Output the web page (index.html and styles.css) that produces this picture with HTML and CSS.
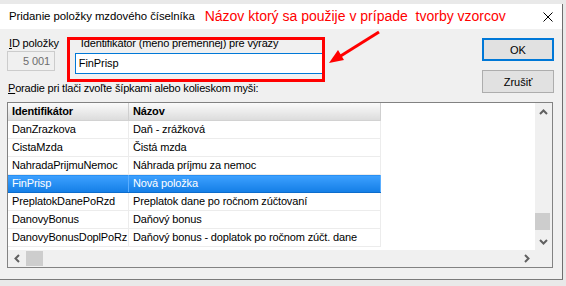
FILE: index.html
```html
<!DOCTYPE html>
<html lang="sk">
<head>
    <meta charset="UTF-8">
    <title>Pridanie položky mzdového číselníka</title>
    <link rel="stylesheet" href="styles.css">
</head>
<body>
    <div class="dialog">
        <div class="titlebar">
            <span class="title">Pridanie položky mzdového číselníka</span>
            <span class="note">Názov ktorý sa použije v prípade&nbsp; tvorby vzorcov</span>
            <svg class="close" width="10" height="10" viewBox="0 0 10 10">
                <path d="M0.5 0.5 L9.5 9.5 M9.5 0.5 L0.5 9.5" stroke="#000" stroke-width="1" fill="none"/>
            </svg>
        </div>

        <div class="content">
            <div class="fields">
                <div class="field id-field">
                    <label><u>I</u>D položky</label>
                    <div class="input disabled">5 001</div>
                </div>
                <div class="field name-field">
                    <label>Identifikátor (meno premennej) pre výrazy</label>
                    <div class="input focused">FinPrisp</div>
                </div>
            </div>

            <div class="buttons">
                <button class="btn btn-default">OK</button>
                <button class="btn">Zrušiť</button>
            </div>

            <div class="list-label"><u>P</u>oradie pri tlači zvoľte šípkami alebo kolieskom myši:</div>

            <div class="list">
                <div class="list-view">
                    <table class="grid">
                        <thead>
                            <tr><th class="col-id">Identifikátor</th><th class="col-name">Názov</th></tr>
                        </thead>
                        <tbody>
                            <tr><td>DanZrazkova</td><td>Daň - zrážková</td></tr>
                            <tr><td>CistaMzda</td><td>Čistá mzda</td></tr>
                            <tr><td>NahradaPrijmuNemoc</td><td>Náhrada príjmu za nemoc</td></tr>
                            <tr class="selected"><td>FinPrisp</td><td>Nová položka</td></tr>
                            <tr><td>PreplatokDanePoRzd</td><td>Preplatok dane po ročnom zúčtovaní</td></tr>
                            <tr><td>DanovyBonus</td><td>Daňový bonus</td></tr>
                            <tr><td>DanovyBonusDoplPoRz</td><td>Daňový bonus - doplatok po ročnom zúčt. dane</td></tr>
                        </tbody>
                    </table>
                </div>

                <div class="vscroll">
                    <div class="sb-btn">
                        <svg width="9" height="6" viewBox="0 0 9 6"><path d="M1 5 L4.5 1.5 L8 5" stroke="#606060" stroke-width="2" fill="none"/></svg>
                    </div>
                    <div class="sb-track"><div class="sb-thumb v-thumb"></div></div>
                    <div class="sb-btn">
                        <svg width="9" height="6" viewBox="0 0 9 6"><path d="M1 1 L4.5 4.5 L8 1" stroke="#606060" stroke-width="2" fill="none"/></svg>
                    </div>
                </div>

                <div class="hscroll">
                    <div class="sb-btn">
                        <svg width="6" height="9" viewBox="0 0 6 9"><path d="M5 1 L1.5 4.5 L5 8" stroke="#606060" stroke-width="2" fill="none"/></svg>
                    </div>
                    <div class="sb-track sb-track-h"><div class="sb-thumb h-thumb"></div></div>
                    <div class="sb-btn">
                        <svg width="6" height="9" viewBox="0 0 6 9"><path d="M1 1 L4.5 4.5 L1 8" stroke="#606060" stroke-width="2" fill="none"/></svg>
                    </div>
                </div>

                <div class="corner"></div>
            </div>
        </div>
    </div>

    <!-- annotation drawn over the screenshot -->
    <svg class="annotation" width="566" height="286" viewBox="0 0 566 286">
        <rect x="68.5" y="38.5" width="255" height="42" fill="none" stroke="#ff0000" stroke-width="3"/>
        <line x1="379" y1="32" x2="339" y2="57" stroke="#ff0000" stroke-width="3"/>
        <polygon points="329,63 344,60 338,50" fill="#ff0000"/>
    </svg>
</body>
</html>
```

FILE: styles.css
```css
body {
    margin: 0;
    background: #e9e9e9;
    font-family: "Liberation Sans", Arial, sans-serif;
    font-size: 11px;
    color: #000;
    position: relative;
    width: 566px;
    height: 286px;
    overflow: hidden;
}

.dialog {
    width: 562px;
    margin-top: 4px;
    border-right: 1px solid #6e6e6e;
    border-bottom: 1px solid #7a7a7a;
    background: #f0f0f0;
}

.titlebar {
    height: 25px;
    background: #fff;
    display: flex;
    align-items: center;
    padding: 0 9px 1px 9px;
    box-sizing: border-box;
}

.title {
    font-size: 11.4px;
    letter-spacing: -0.05px;
}

.note {
    margin-left: 10px;
    font-size: 14px;
    color: #ff0000;
}

.close {
    margin-left: auto;
    margin-top: 1px;
}

.content {
    display: grid;
    grid-template-columns: 1fr 72px;
    padding: 8px 8px 11px 7px;
}

.fields {
    display: flex;
    gap: 16px;
    height: 37px;
}

.field label {
    display: block;
    line-height: 13px;
    letter-spacing: -0.15px;
}

.id-field label {
    padding-left: 2px;
}

.name-field label {
    padding-left: 6px;
}

.input {
    box-sizing: border-box;
    line-height: 19px;
    background: #fff;
    letter-spacing: -0.1px;
}

.id-field .input {
    width: 48px;
    height: 20px;
    margin-top: 1px;
    border: 1px solid #cccccc;
    background: #f0f0f0;
    color: #6d6d6d;
    text-align: right;
    padding-right: 4px;
}

.name-field .input {
    width: 249px;
    height: 21px;
    margin-top: 3px;
    border: 1px solid #0078d7;
    padding-left: 3px;
}

.buttons {
    grid-row: span 2;
    display: flex;
    flex-direction: column;
    gap: 9px;
    margin-top: 1px;
}

.btn {
    width: 72px;
    height: 23px;
    padding: 0;
    background: #e1e1e1;
    border: 1px solid #adadad;
    font-family: "Liberation Sans", Arial, sans-serif;
    font-size: 11px;
    color: #000;
}

.btn-default {
    border: 2px solid #0078d7;
}

.list-label {
    margin-top: 8px;
    line-height: 13px;
    padding-left: 1px;
    letter-spacing: -0.18px;
}

.list {
    grid-column: 1 / -1;
    margin-top: 7px;
    width: 546px;
    height: 166px;
    box-sizing: border-box;
    border: 1px solid #828282;
    display: grid;
    grid-template-columns: 1fr 17px;
    grid-template-rows: 1fr 17px;
    background: #fff;
}

.list-view {
    overflow: hidden;
    background: #fff;
}

.grid {
    border-collapse: collapse;
    table-layout: fixed;
    width: 373px;
    letter-spacing: -0.15px;
}

.grid th,
.grid td {
    height: 17px;
    padding: 0 0 0 4px;
    line-height: 17px;
    text-align: left;
    white-space: nowrap;
    overflow: hidden;
    border-right: 1px solid #ececec;
    border-bottom: 1px solid #ececec;
}

.grid th {
    font-weight: bold;
    background: linear-gradient(#fbfbfb, #dcdcdc);
    border-right: 1px solid #cfcfcf;
    border-bottom: 1px solid #d2d2d2;
}

.col-id {
    width: 116px;
}

.col-name {
    width: 247px;
}

.grid tr.selected td {
    background: linear-gradient(#3ea1ff, #137ee6);
    color: #fff;
    border-bottom: 1px solid #0c6ccc;
    border-right: 1px solid #5aaeff;
}

.vscroll,
.hscroll {
    background: #f0f0f0;
    display: flex;
}

.vscroll {
    flex-direction: column;
}

.sb-btn {
    width: 17px;
    height: 17px;
    display: flex;
    align-items: center;
    justify-content: center;
    flex: none;
}

.sb-track {
    flex: 1;
}

.sb-thumb {
    background: #cdcdcd;
}

.v-thumb {
    width: 15px;
    height: 17px;
    margin: 93px 0 0 0;
}

.sb-track-h {
    display: flex;
    align-items: center;
}

.h-thumb {
    width: 17px;
    height: 15px;
    margin-left: 1px;
}

.corner {
    background: #f0f0f0;
}

.annotation {
    position: absolute;
    top: 0;
    left: 0;
    pointer-events: none;
}
```
